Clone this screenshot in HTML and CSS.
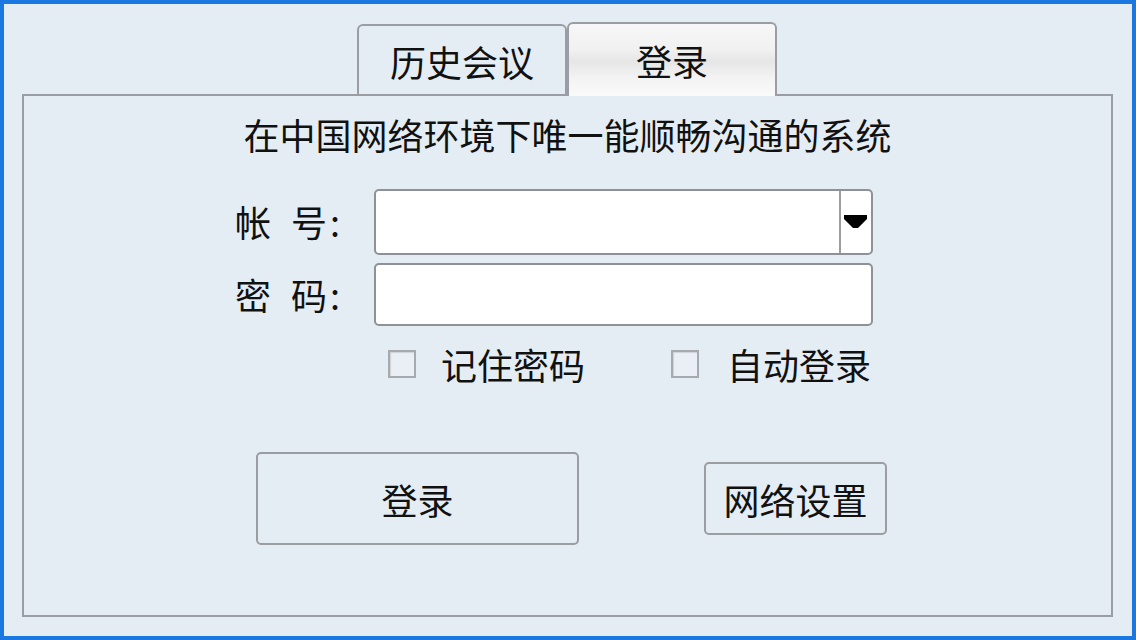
FILE: index.html
```html
<!DOCTYPE html>
<html lang="zh-CN">
<head>
    <meta charset="UTF-8">
    <meta name="viewport" content="width=device-width, initial-scale=1.0">
    <title>登录</title>
    <link rel="stylesheet" href="styles.css">
</head>
<body>
    <div class="frame">
        <div class="tabs">
            <div class="tab">历史会议</div>
            <div class="tab active">登录</div>
        </div>

        <div class="panel">
            <div class="slogan">在中国网络环境下唯一能顺畅沟通的系统</div>

            <div class="fields">
                <label class="field-label"><span class="gap">帐</span>号<span class="colon">:</span></label>
                <div class="combo">
                    <input class="combo-input" type="text">
                    <div class="combo-btn">
                        <svg width="24" height="14" viewBox="0 0 24 14">
                            <polygon points="0,0 23,0 23,4 14,13 9,13 0,4" fill="#000"/>
                        </svg>
                    </div>
                </div>

                <label class="field-label"><span class="gap">密</span>码<span class="colon">:</span></label>
                <input class="text-input" type="password">
            </div>

            <div class="checks">
                <label class="check">
                    <span class="box"></span>
                    <span>记住密码</span>
                </label>
                <label class="check second">
                    <span class="box"></span>
                    <span>自动登录</span>
                </label>
            </div>

            <div class="actions">
                <button class="btn btn-login">登录</button>
                <button class="btn btn-net">网络设置</button>
            </div>
        </div>
    </div>
</body>
</html>
```

FILE: styles.css
```css
/* Pantalla completa con marco azul */
body, html {
    margin: 0;
    height: 100%;
    font-family: "Noto Sans CJK SC", "Noto Sans", sans-serif;
    color: #111;
}

.frame {
    width: 1136px;
    height: 640px;
    box-sizing: border-box;
    border: 4px solid #1b78e0;
    background-color: #e5edf4;
    display: flex;
    flex-direction: column;
}

/* Pestañas */
.tabs {
    display: flex;
    align-items: flex-end;
    padding-left: 353px;
    margin-top: 18px;
    margin-bottom: -2px;
}

.tab {
    width: 206px;
    height: 70px;
    border: 2px solid #9a9ea4;
    border-bottom: none;
    border-radius: 6px 6px 0 0;
    display: flex;
    justify-content: center;
    align-items: center;
    font-size: 36px;
    line-height: 1;
}

.tab.active {
    height: 72px;
    position: relative;
    z-index: 1;
    background: linear-gradient(#f7f7f7 0%, #f1f1f1 35%, #e6e6e6 52%, #f3f3f3 75%, #fafafa 100%);
}

/* Panel principal */
.panel {
    flex: 1;
    margin: 0 19px 19px 18px;
    border: 2px solid #9a9ea4;
    display: flex;
    flex-direction: column;
    padding-top: 18px;
}

.slogan {
    font-size: 36px;
    line-height: 40px;
    text-align: center;
}

.fields {
    display: grid;
    grid-template-columns: 106px 499px;
    grid-template-rows: 66px 63px;
    column-gap: 33px;
    row-gap: 8px;
    margin-top: 35px;
    margin-left: 211px;
}

.field-label {
    font-size: 36px;
    display: flex;
    align-items: center;
    margin-top: -2px;
}

.gap {
    margin-right: 20px;
}

.colon {
    margin-left: 3px;
}

.combo {
    display: flex;
    border: 2px solid #8e9296;
    border-radius: 5px;
    background-color: #fff;
}

.combo-input, .text-input {
    border: none;
    outline: none;
    background: transparent;
    font-size: 30px;
    font-family: inherit;
    padding: 0 10px;
}

.combo-input {
    flex: 1;
    min-width: 0;
}

.combo-btn {
    width: 30px;
    border-left: 2px solid #9a9ea2;
    display: flex;
    justify-content: center;
    align-items: center;
}

.text-input {
    border: 2px solid #8e9296;
    border-radius: 5px;
    background-color: #fff;
}

/* Casillas */
.checks {
    display: flex;
    margin-top: 23px;
    padding-left: 364px;
    height: 29px;
}

.check {
    display: flex;
    align-items: center;
    font-size: 36px;
    line-height: 1;
    gap: 25px;
}

.check.second {
    margin-left: 86px;
    gap: 28px;
}

.box {
    width: 24px;
    height: 24px;
    border: 2px solid #a6aaae;
    background-color: #e9eff4;
    box-shadow: inset 1px 1px 1px rgba(0, 0, 0, 0.12);
}

/* Botones */
.actions {
    display: flex;
    align-items: center;
    margin-top: 74px;
}

.btn {
    border: 2px solid #9a9ea2;
    border-radius: 5px;
    background-color: #e5edf4;
    font-family: inherit;
    font-size: 36px;
    color: #111;
    padding: 0;
}

.btn-login {
    width: 323px;
    height: 93px;
    margin-left: 232px;
}

.btn-net {
    width: 183px;
    height: 73px;
    margin-left: 125px;
}
```
